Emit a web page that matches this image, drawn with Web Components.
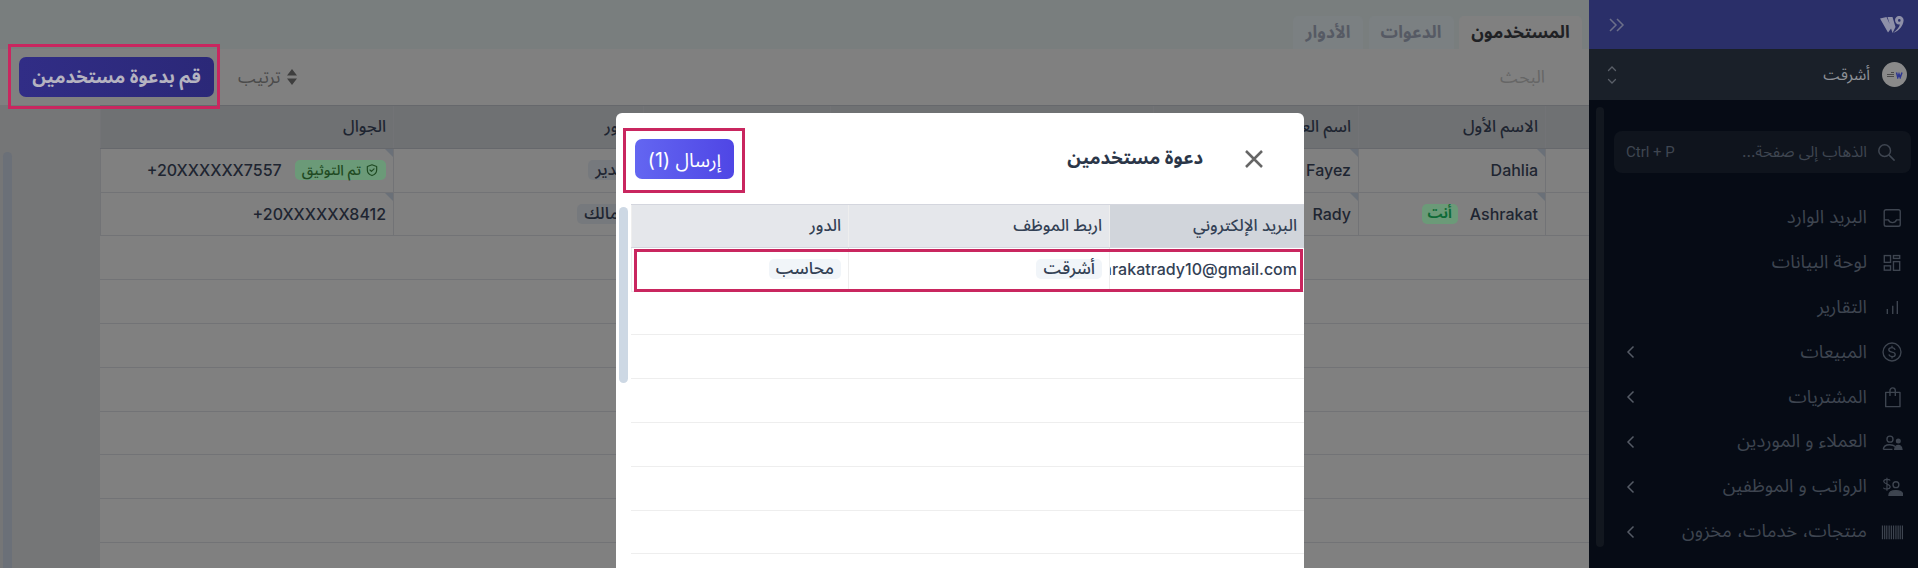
<!DOCTYPE html>
<html lang="ar" dir="rtl">
<head>
<meta charset="utf-8">
<title>المستخدمون</title>
<style>
  html, body { margin: 0; height: 568px; overflow: hidden; background: #808080; }
  body { font-family: Inter, "Noto Sans Arabic", "Noto Sans", "DejaVu Sans", sans-serif; }
</style>
</head>
<body>
<users-page>
  <app-sidebar slot="side">
    <side-item icon="inbox">البريد الوارد</side-item>
    <side-item icon="grid">لوحة البيانات</side-item>
    <side-item icon="bars">التقارير</side-item>
    <side-item icon="dollar" more>المبيعات</side-item>
    <side-item icon="bag" more>المشتريات</side-item>
    <side-item icon="people" more>العملاء و الموردين</side-item>
    <side-item icon="payroll" more>الرواتب و الموظفين</side-item>
    <side-item icon="barcode" more>منتجات، خدمات، مخزون</side-item>
  </app-sidebar>

  <page-tabs></page-tabs>
  <page-toolbar></page-toolbar>

  <div class="table-area" style="display:flex;flex:1;min-height:0">
    <data-grid style="--cols:44px 187px 205px 323px 187px 250px 293px;--line:#727376;--head:#6f7173;--head-line:#66686c;--row:#808080;--text:#1e2531;flex:0 0 1489px">
      <grid-row head>
        <grid-cell></grid-cell><grid-cell>الاسم الأول</grid-cell><grid-cell>اسم العائلة</grid-cell><grid-cell>البريد الإلكتروني</grid-cell><grid-cell>الوظيفة</grid-cell><grid-cell>الدور</grid-cell><grid-cell>الجوال</grid-cell>
      </grid-row>
      <grid-row>
        <grid-cell></grid-cell>
        <grid-cell flag>Dahlia</grid-cell>
        <grid-cell flag>Fayez</grid-cell>
        <grid-cell></grid-cell><grid-cell></grid-cell>
        <grid-cell><tag-chip tone="dim" style="margin-right:3px">مدير</tag-chip></grid-cell>
        <grid-cell flag><tag-chip tone="verified"><svg width="14" height="14" viewBox="0 0 24 24" fill="none" stroke="currentColor" stroke-width="2" stroke-linecap="round" stroke-linejoin="round"><path d="M12 3l8 3v6c0 5-3.500 8-8 9.500C7.500 20 4 17 4 12V6z"/><path d="M8.500 12l2.500 2.500 4.500-4.500"/></svg>تم التوثيق</tag-chip><span style="margin-right:13px" dir="ltr">+20XXXXXX7557</span></grid-cell>
      </grid-row>
      <grid-row>
        <grid-cell></grid-cell>
        <grid-cell flag>Ashrakat<tag-chip tone="you" style="margin-inline-start:12px">أنت</tag-chip></grid-cell>
        <grid-cell flag>Rady</grid-cell>
        <grid-cell></grid-cell><grid-cell></grid-cell>
        <grid-cell><tag-chip tone="dim" style="margin-right:10px">مالك</tag-chip></grid-cell>
        <grid-cell flag><span dir="ltr">+20XXXXXX8412</span></grid-cell>
      </grid-row>
      <grid-row></grid-row><grid-row></grid-row><grid-row></grid-row><grid-row></grid-row>
      <grid-row></grid-row><grid-row></grid-row><grid-row></grid-row>
    </data-grid>
    <left-gutter></left-gutter>
  </div>

  <invite-modal slot="modal">
    <data-grid style="--cols:195px 261px 1fr;--line:#eeeeee;--head:#e5e7eb;--head-line:#d4d6de;--row:#fff;--text:#334155">
      <grid-row head>
        <grid-cell style="background:#d1d5db">البريد الإلكتروني</grid-cell><grid-cell>اربط الموظف</grid-cell><grid-cell>الدور</grid-cell>
      </grid-row>
      <grid-row>
        <grid-cell><span dir="ltr">ashrakatrady10@gmail.com</span></grid-cell>
        <grid-cell><tag-chip>أشرقت</tag-chip></grid-cell>
        <grid-cell><tag-chip>محاسب</tag-chip></grid-cell>
        <mark-frame style="inset:1px 1px -1px 3px"></mark-frame>
      </grid-row>
      <grid-row></grid-row><grid-row></grid-row><grid-row></grid-row><grid-row></grid-row>
      <grid-row></grid-row><grid-row></grid-row><grid-row></grid-row>
    </data-grid>
  </invite-modal>
</users-page>

<script>
const ICONS = {
  inbox: '<rect x="3.500" y="3" width="17.500" height="18" rx="2"/><path d="M3.500 14h4.500c1 2.500 2.500 3 4.500 3s3.500-.5 4.500-3h4"/>',
  grid: '<rect x="3.600" y="3.900" width="6.800" height="7.400"/><rect x="13.600" y="3.900" width="6.800" height="3.100"/><rect x="3.600" y="15.100" width="6.800" height="4.700"/><rect x="13.600" y="10.500" width="6.800" height="9.500"/>',
  bars: '<path d="M6.900 18.500V13M12.800 18.500V9.500M17.800 18.500V4.400"/>',
  dollar: '<circle cx="12" cy="12" r="9.800"/><path d="M15.500 9.500c-.5-1.300-1.800-2.300-3.500-2.300-2 0-3.500 1-3.500 2.400S10 11.800 12 12.100s3.500 1 3.500 2.500-1.500 2.400-3.500 2.400c-1.700 0-3-.9-3.500-2.200M12 5.200v2M12 17v2"/>',
  bag: '<path d="M5.100 6.900h15.600v15.600H5.100z" stroke-linejoin="round"/><path d="M9.800 10.900V5a2.900 2.900 0 0 1 5.800 0v5.900"/>',
  people: '<circle cx="9.800" cy="8.900" r="3.300"/><path d="M2.500 20c.3-3 3-5 7-5 2.500 0 4.500.7 6 2M2.500 20h10"/><circle cx="18.900" cy="11" r="2" fill="currentColor"/><path d="M15 20c.3-2.800 1.800-4.300 3.900-4.300s3.600 1.500 3.900 4.300z" fill="currentColor"/>',
  payroll: '<path d="M10 5C9 3.200 3 3.200 3 6s7 2.800 7 5.800-6 3-7.500 1M6.500 2v14" stroke-width="1.300"/><circle cx="16.300" cy="9.500" r="3.200"/><path d="M8.700 21c0-3 3-5 7.500-5s7.500 2 7.500 5z" fill="currentColor"/>',
  barcode: '<path d="M1.600 5v15M4 5v15M6.300 5v15M8.900 5v15M11.300 5v15M13.700 5v15M16.300 5v15M18.700 5v15M21 5v15M23.400 5v15" stroke-width="1.300"/>'
};

class UsersPage extends HTMLElement {
  constructor() {
    super();
    this.attachShadow({mode: 'open'}).innerHTML = `
      <style>
        :host { display: flex; height: 568px; position: relative; overflow: hidden; }
        .main { flex: 1; min-width: 0; display: flex; flex-direction: column; }
        ::slotted([slot=side]) { flex: 0 0 329px; }
      </style>
      <slot name="side"></slot>
      <div class="main"><slot></slot></div>
      <slot name="modal"></slot>`;
  }
}

class AppSidebar extends HTMLElement {
  constructor() {
    super();
    this.attachShadow({mode: 'open'}).innerHTML = `
      <style>
        :host { display: flex; flex-direction: column; background: #060b15; height: 568px; }
        .brand { height: 49px; background: #2a2f69; display: flex; align-items: center; justify-content: space-between; padding: 0 14px 0 20px; flex: none; }
        .company { height: 51px; background: #1a2029; display: flex; align-items: center; gap: 12px; padding: 0 11px 0 18px; color: #8e9197; font-size: 16px; flex: none; }
        .avatar { width: 25px; height: 25px; border-radius: 50%; background: #8a8a8a; display: flex; align-items: center; justify-content: center; }
        .company .name { flex: 1; }
        .body { flex: 1; display: flex; min-height: 0; padding: 7px 0 21px 0; }
        .nav { flex: 1; min-width: 0; padding: 24px 7px 0 10px; }
        .thumb { width: 8px; margin: 0 0 0 7px; border-radius: 4px; background: #12171f; flex: none; }
        .search { height: 42px; background: #0f141d; border-radius: 8px; display: flex; align-items: center; gap: 10px; padding: 0 16px 0 12px; color: #3f4651; font-size: 15.500px; margin-bottom: 22.600px; }
        .search .hint { flex: 1; }
        .search .keys { font-family: Roboto, sans-serif; font-size: 15px; }
        svg { display: block; }
      </style>
      <div class="brand">
        <svg width="24" height="18" viewBox="0 0 24 18" fill="#8e90a8"><path d="M0 2.500L6.500 1 11.500 12 8 16.500zM7.500 1H12.500L15.500 11 12.500 17z"/><path d="M15 4a4.300 4.300 0 1 1 8.600 .5c-.5 5.500-4.500 10.500-10.500 12.500 3.800-3 6-5.500 6.800-8.500-2.700 .6-4.900-1.700-4.900-4.500zm3 .4a1.300 1.300 0 1 0 2.600 0 1.300 1.300 0 0 0-2.600 0z" fill-rule="evenodd"/></svg>
        <svg width="16" height="14" viewBox="0 0 16 14" fill="none" stroke="#6c6f8a" stroke-width="1.500"><path d="M1 1l6 6-6 6M8 1l6 6-6 6"/></svg>
      </div>
      <div class="company">
        <span class="avatar"><svg width="17" height="8" viewBox="0 0 17 8"><path d="M10.500 1.500l1.300 5 1.200-3.500 1.200 3.500 1.800-5" fill="none" stroke="#2d3691" stroke-width="1.500"/><path d="M5 1.500h3M1 3.500h7M1 5.500h7" stroke="#4a4a4a" stroke-width="1"/></svg></span>
        <span class="name">أشرقت</span>
        <svg width="10" height="18" viewBox="0 0 10 18" fill="none" stroke="#5a5f68" stroke-width="1.300" stroke-linecap="round"><path d="M1.500 4.500L5 1l3.500 3.500M1.500 13.500L5 17l3.500-3.500"/></svg>
      </div>
      <div class="body">
        <div class="nav">
          <div class="search">
            <svg width="18" height="18" viewBox="0 0 20 20" fill="none" stroke="#3f4651" stroke-width="1.700" stroke-linecap="round"><circle cx="8.500" cy="8.500" r="6.500"/><path d="M13.500 13.500l5.500 5.500"/></svg>
            <span class="hint">الذهاب إلى صفحة...</span>
            <span class="keys" dir="ltr">Ctrl + P</span>
          </div>
          <slot></slot>
        </div>
        <div class="thumb"></div>
      </div>`;
  }
}

class SideItem extends HTMLElement {
  constructor() {
    super();
    const icon = ICONS[this.getAttribute('icon')];
    const more = this.hasAttribute('more') ? `<svg class="more" width="9" height="14" viewBox="0 0 9 14" fill="none" stroke="#555b66" stroke-width="1.500"><path d="M7.500 1.500L2 7l5.500 5.500"/></svg>` : '';
    this.attachShadow({mode: 'open'}).innerHTML = `
      <style>
        :host { display: flex; align-items: center; height: 44.800px; color: #3e4550; font-size: 18.500px; }
        .icon { width: 22px; height: 22px; flex: none; margin-inline: 8px 14px; color: #3e4550; display: block; }
        .label { flex: 1; }
        .more { flex: none; margin-left: 12px; }
      </style>
      <svg class="icon" viewBox="0 0 24 24" fill="none" stroke="currentColor" stroke-width="1.500">${icon}</svg>
      <span class="label"><slot></slot></span>${more}`;
  }
}

class PageTabs extends HTMLElement {
  constructor() {
    super();
    this.attachShadow({mode: 'open'}).innerHTML = `
      <style>
        :host { display: flex; height: 49px; flex: none; align-items: flex-end; gap: 5.500px; padding-inline-start: 7px; background: #797e7e; font-size: 17.300px; font-weight: 700; color: #565a64; }
        .tab { height: 33px; display: flex; align-items: center; justify-content: center; background: #7b8082; border-radius: 5px 5px 0 0; }
        .on { background: #808080; color: #1f2124; }
      </style>
      <div class="tab on" style="width:123px">المستخدمون</div>
      <div class="tab" style="width:85px">الدعوات</div>
      <div class="tab" style="width:70px">الأدوار</div>`;
  }
}

class PageToolbar extends HTMLElement {
  constructor() {
    super();
    this.attachShadow({mode: 'open'}).innerHTML = `
      <style>
        :host { display: flex; height: 56px; flex: none; align-items: center; gap: 24px; padding: 0 44px 0 19px; background: #808080; font-size: 17.500px; position: relative; z-index: 1; }
        .search { flex: 1; color: #666; }
        .sort { display: flex; align-items: center; gap: 5px; color: #4b4b4b; }
        .invite { position: relative; width: 195px; height: 40px; border-radius: 7px; background: linear-gradient(90deg, #312d86, #2b2878); color: #b5b3c0; font-size: 18.500px; font-weight: 700; display: flex; align-items: center; justify-content: center; }
      </style>
      <div class="search">البحث</div>
      <div class="sort"><svg width="12" height="18" viewBox="0 0 12 18" fill="#3e3e3e"><path d="M6 1l5 6.500H1zM6 17l5-6.500H1z"/></svg>ترتيب</div>
      <div class="invite">قم بدعوة مستخدمين<mark-frame style="inset:-13px -6px -12px -11px"></mark-frame></div>`;
  }
}

class LeftGutter extends HTMLElement {
  constructor() {
    super();
    this.attachShadow({mode: 'open'}).innerHTML = `
      <style>
        :host { display: block; flex: 1; background: #757677; position: relative; }
        .thumb { position: absolute; top: 47px; bottom: 0; left: 3px; width: 9px; border-radius: 5px 5px 0 0; background: #6b7078; }
      </style>
      <div class="thumb"></div>`;
  }
}

class DataGrid extends HTMLElement {
  constructor() {
    super();
    this.attachShadow({mode: 'open'}).innerHTML = `
      <style>:host { display: block; font-size: 16px; font-weight: 500; color: var(--text); flex: 1; min-width: 0; overflow: hidden; }</style>
      <slot></slot>`;
  }
}

class GridRow extends HTMLElement {
  constructor() {
    super();
    this.attachShadow({mode: 'open'}).innerHTML = `
      <style>
        :host { display: grid; grid-template-columns: var(--cols); height: 43.800px; box-sizing: border-box; position: relative; background: var(--row); border-bottom: 1px solid var(--line); }
        :host([head]) { background: var(--head); border-top: 1px solid var(--head-line); border-bottom-color: var(--head-line); font-size: 16.500px; }
      </style>
      <slot></slot>`;
  }
}

class GridCell extends HTMLElement {
  constructor() {
    super();
    this.attachShadow({mode: 'open'}).innerHTML = `
      <style>
        :host { display: flex; align-items: center; padding: 0 7px; min-width: 0; overflow: hidden; white-space: nowrap; position: relative; border-inline-end: 1px solid var(--line); }
        .flag { position: absolute; top: 0; right: 0; border-top: 8px solid #6a7078; border-left: 8px solid transparent; display: none; }
        :host([flag]) .flag { display: block; }
      </style>
      <span class="flag"></span><slot></slot>`;
  }
}

class TagChip extends HTMLElement {
  constructor() {
    super();
    this.attachShadow({mode: 'open'}).innerHTML = `
      <style>
        :host { display: inline-flex; align-items: center; gap: 4px; height: 20px; padding: 0 7px; border-radius: 5px; background: #f1f5f9; color: #334155; font-size: 17px; }
        :host([tone=dim]) { background: #76797d; color: #1e2531; }
        :host([tone=you]) { background: #6b9a78; color: #0e6a36; font-size: 14px; font-weight: 700; padding: 0 6px; }
        :host([tone=verified]) { background: #6b9a78; color: #1f4a22; font-size: 14.500px; padding: 0 7px; }
      </style>
      <slot></slot>`;
  }
}

class MarkFrame extends HTMLElement {
  constructor() {
    super();
    this.attachShadow({mode: 'open'}).innerHTML = `
      <style>:host { display: block; position: absolute; border: 3px solid #c9265f; pointer-events: none; }</style>`;
  }
}

class InviteModal extends HTMLElement {
  constructor() {
    super();
    this.attachShadow({mode: 'open'}).innerHTML = `
      <style>
        :host { display: flex; flex-direction: column; position: absolute; left: 616px; top: 113px; width: 688px; height: 455px; background: #fff; border-radius: 6px 6px 0 0; overflow: hidden; z-index: 2; }
        header { height: 91px; flex: none; display: flex; align-items: center; justify-content: flex-start; padding: 0 41px 0 19px; color: #2b3648; box-sizing: border-box; }
        .close { display: block; margin-inline-end: 42px; }
        h2 { margin: 0; font-size: 18.500px; font-weight: 700; flex: 1; }
        button { position: relative; width: 99px; height: 40px; border: 0; border-radius: 7px; background: linear-gradient(90deg, #6366f1, #4f46e5); color: #fff; font: inherit; font-size: 19.500px; }
        .body { flex: 1; display: flex; min-height: 0; }
        .track { width: 15px; flex: none; padding: 3px 3px 0 3px; box-sizing: border-box; }
        .thumb { height: 176px; background: #cdd8e4; border-radius: 5px; }
      </style>
      <header>
        <svg class="close" width="18" height="18" viewBox="0 0 18 18" stroke="#666" stroke-width="2.500"><path d="M1 1l16 16M17 1L1 17"/></svg>
        <h2>دعوة مستخدمين</h2>
        <button>إرسال (1)<mark-frame style="inset:-11px -11px -14px -12px"></mark-frame></button>
      </header>
      <div class="body"><slot></slot><div class="track"><div class="thumb"></div></div></div>`;
  }
}

customElements.define('mark-frame', MarkFrame);
customElements.define('tag-chip', TagChip);
customElements.define('grid-cell', GridCell);
customElements.define('grid-row', GridRow);
customElements.define('data-grid', DataGrid);
customElements.define('left-gutter', LeftGutter);
customElements.define('page-toolbar', PageToolbar);
customElements.define('page-tabs', PageTabs);
customElements.define('side-item', SideItem);
customElements.define('app-sidebar', AppSidebar);
customElements.define('invite-modal', InviteModal);
customElements.define('users-page', UsersPage);
</script>
</body>
</html>
